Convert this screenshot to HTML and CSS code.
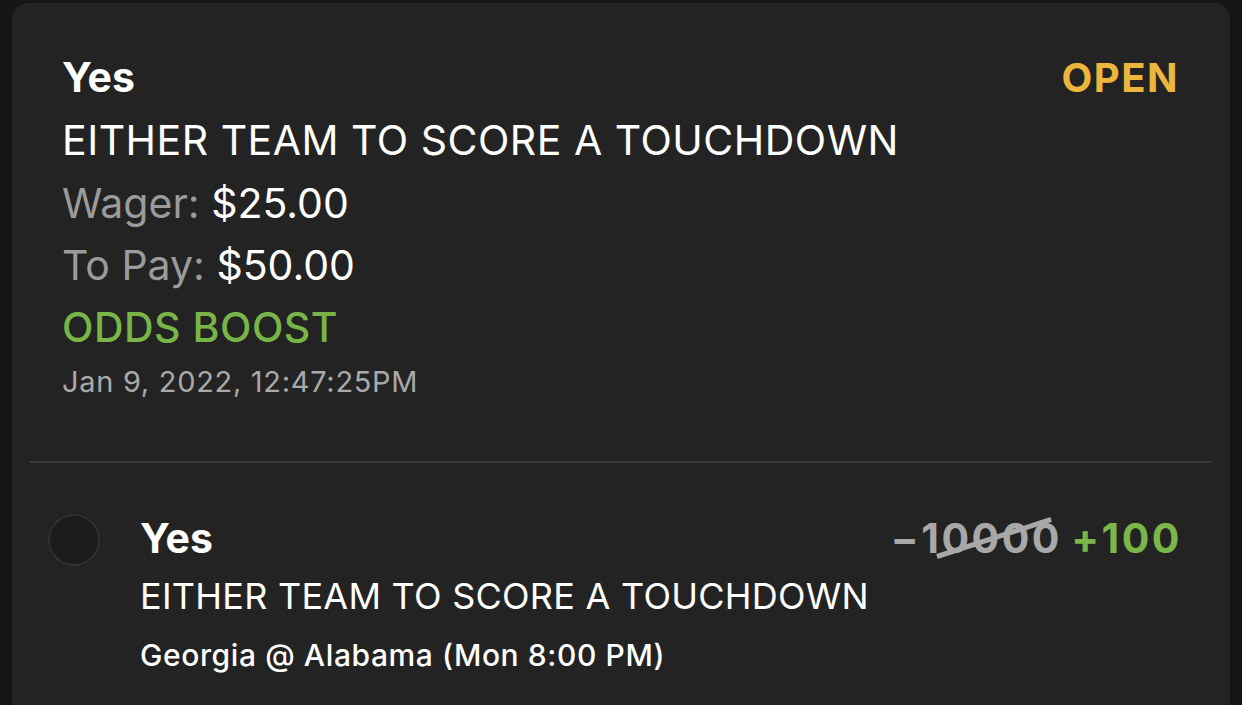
FILE: index.html
```html
<!DOCTYPE html>
<html lang="en">
<head>
    <meta charset="UTF-8">
    <meta name="viewport" content="width=device-width, initial-scale=1.0">
    <title>Bet Details</title>
    <link rel="stylesheet" href="styles.css">
</head>
<body>

<div class="card">
    <div class="summary">
        <div class="top-row">
            <div class="pick">Yes</div>
            <div class="status">OPEN</div>
        </div>
        <div class="market">EITHER TEAM TO SCORE A TOUCHDOWN</div>
        <div class="amount"><span class="label">Wager:</span> $25.00</div>
        <div class="amount"><span class="label">To Pay:</span> $50.00</div>
        <div class="boost">ODDS BOOST</div>
        <div class="date">Jan 9, 2022, 12:47:25PM</div>
    </div>

    <div class="divider"></div>

    <div class="leg">
        <div class="dot"></div>
        <div class="leg-info">
            <div class="top-row">
                <div class="pick">Yes</div>
                <div class="odds">
                    <span class="old-odds">&minus;1<span class="struck">0000</span></span>
                    <span class="new-odds">+100</span>
                </div>
            </div>
            <div class="leg-market">EITHER TEAM TO SCORE A TOUCHDOWN</div>
            <div class="game">Georgia @ Alabama (Mon 8:00 PM)</div>
        </div>
    </div>
</div>

</body>
</html>
```

FILE: styles.css
```css
body {
    font-family: Inter, "Noto Sans", sans-serif;
    background-color: #151515;
    margin: 0;
    padding: 3px 12px 0 12px;
    color: #fff;
    overflow: hidden;
}
.card {
    background: #232323;
    border-radius: 16px 16px 0 0;
    height: 760px;
}
.summary {
    padding: 43px 51px 0 50px;
}
.top-row {
    display: flex;
    justify-content: space-between;
    align-items: center;
}
.pick {
    font-size: 41px;
    font-weight: 700;
    line-height: 63px;
}
.status {
    font-size: 40px;
    font-weight: 700;
    letter-spacing: 1.5px;
    color: #ebb63b;
    line-height: 63px;
}
.market {
    font-size: 41px;
    letter-spacing: 0.5px;
    line-height: 63px;
}
.amount {
    font-size: 41px;
    line-height: 62px;
}
.label {
    color: #9b9b9b;
}
.boost {
    font-size: 41px;
    font-weight: 500;
    letter-spacing: 0.5px;
    color: #79b546;
    line-height: 63px;
}
.date {
    font-size: 29px;
    letter-spacing: 0.7px;
    color: #a9a9a9;
    line-height: 46px;
}
.divider {
    height: 2px;
    background: #393939;
    margin: 56px 18px 0 18px;
}
.leg {
    display: flex;
    align-items: flex-start;
    padding: 46px 50px 0 36px;
}
.dot {
    width: 48px;
    height: 48px;
    border-radius: 50%;
    background: #1b1b1b;
    border: 2px solid #2f2f2f;
    margin-top: 5px;
    flex-shrink: 0;
}
.leg-info {
    flex: 1;
    margin-left: 40px;
}
.leg-info .pick {
    line-height: 58px;
}
.odds {
    font-size: 41px;
    font-weight: 700;
    letter-spacing: 2.5px;
    word-spacing: -3px;
    line-height: 58px;
    margin-right: -2px;
}
.old-odds {
    color: #a8a8a8;
}
.struck {
    position: relative;
}
.struck::after {
    content: "";
    position: absolute;
    left: -4px;
    top: 41px;
    width: 120px;
    height: 5px;
    background: #a8a8a8;
    transform: rotate(-18deg);
    transform-origin: left center;
}
.new-odds {
    color: #7ab648;
}
.leg-market {
    font-size: 36px;
    letter-spacing: 0.25px;
    line-height: 59px;
}
.game {
    font-size: 30px;
    font-weight: 500;
    letter-spacing: 0.6px;
    line-height: 59px;
}
```
